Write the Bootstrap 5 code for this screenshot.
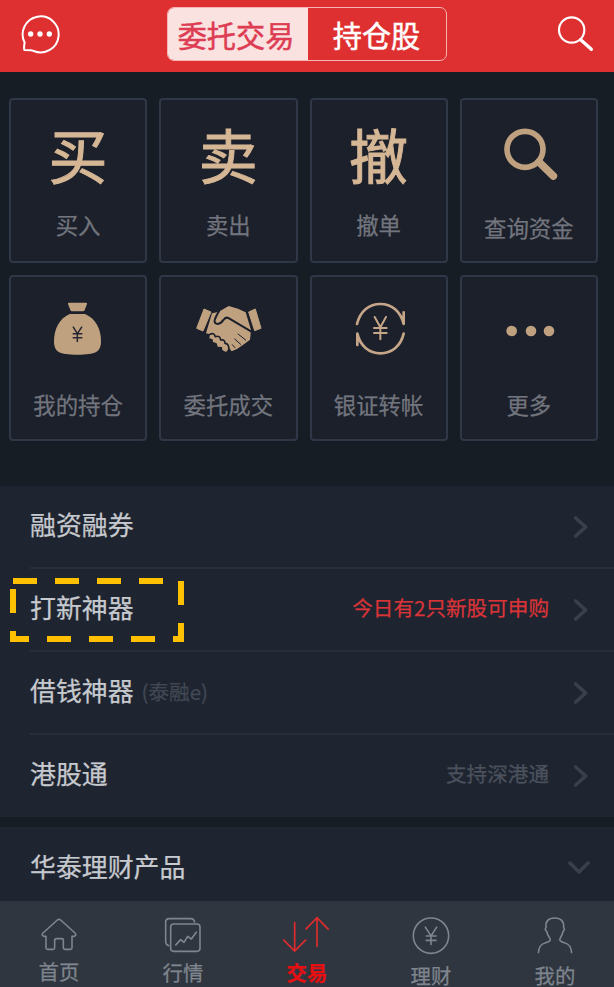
<!DOCTYPE html>
<html lang="zh-CN">
<head>
<meta charset="utf-8">
<meta name="viewport" content="width=device-width, initial-scale=1">
<title>委托交易</title>
<link href="https://cdn.jsdelivr.net/npm/bootstrap@5.3.0/dist/css/bootstrap.min.css" rel="stylesheet">
<style>
body{background:#171d25;font-family:"Noto Sans CJK SC",sans-serif;line-height:1;height:987px;-webkit-text-stroke:.25px currentColor}
svg{display:block;flex:none}
.topbar{height:71.5px;background:#df3031;padding:7px 20px 0}
.seg{width:280px;height:54px;border:1.5px solid #f6b5b2;border-radius:7px;font-size:29.2px;color:#fff;margin-left:106.5px;line-height:52px;-webkit-text-stroke-width:.5px}
.seg-on{background:#fae2e1;color:#dd3c52;width:140px;padding-right:3px}
.tiles{display:grid;grid-template-columns:repeat(4,1fr);gap:12px;padding:26px 16px 0 9px;height:414.5px;align-content:start}
.tile{height:165.5px;border:2px solid #303747;border-radius:4px;background:#1c202b;color:#72757d;font-size:22.4px;overflow:hidden}
.tile .pic{width:138px;height:110px;margin:-2px 0 0 -2px}
.tile .glyph{font-size:59px;line-height:110px;height:108px;color:#d5b695;-webkit-text-stroke:1px #d5b695;margin-top:-1px}
.tile .cap{line-height:34px}
.cap.low{padding-top:2px}
.rowline{height:82px;padding-left:30px;background:#1f2530;color:#c6c9ce;font-size:25.9px}
.rowline .ttl{padding-bottom:6px;white-space:nowrap}
.rowline .side{font-size:20.6px;color:#4b525e;padding-bottom:5px;margin-right:24px;white-space:nowrap}
.rowline .side.hot{color:#d93438}
.rowline .sub{font-size:20.6px;color:#414854;padding-bottom:3px;margin-left:8px}
.rule{height:2px;background:#282e39;margin-left:30px}
.arrow{margin-right:23px}
.panel{background:#1f2530;height:331px}
.mark-box{left:10px;top:9px}
.tabs{background:#30363f;height:86px;overflow:hidden}
.tabs .strip{margin:0 -3px}
.tab-i{width:124px;font-size:20.4px;color:#7f858e}
.tab-i.now{color:#e60f12;font-weight:700}
.d1{padding-top:4px}.d2{padding-top:5px}.d3{padding-top:7.5px}
</style>
<script src="https://cdn.jsdelivr.net/npm/bootstrap@5.3.0/dist/js/bootstrap.bundle.min.js"></script>
</head>
<body class="overflow-hidden">
<header class="topbar d-flex align-items-start">
  <svg width="40" height="54" viewBox="60 21 120 162" fill="none" stroke="#fff" stroke-width="6"><path d="M74 128A54 54 0 1 1 101 153Q98 150 73 150Q71 140 74 128Z" stroke-linejoin="round"/><g fill="#fff" stroke="none"><circle cx="92" cy="102" r="8"/><circle cx="120" cy="102" r="8"/><circle cx="148" cy="102" r="8"/></g></svg>
  <div class="seg d-flex overflow-hidden text-center"><div class="seg-on">委托交易</div><div class="flex-fill">持仓股</div></div>
  <svg class="ms-auto" width="40" height="54" viewBox="741 21 120 162" fill="none" stroke="#fff" stroke-width="6.5"><circle cx="794" cy="90" r="38"/><path d="M821 119L853 148" stroke-width="10" stroke-linecap="round"/></svg>
</header>

<main>
<section class="tiles text-center">
  <div class="tile"><div class="glyph">买</div><div class="cap">买入</div></div>
  <div class="tile"><div class="glyph">卖</div><div class="cap">卖出</div></div>
  <div class="tile"><div class="glyph">撤</div><div class="cap">撤单</div></div>
  <div class="tile"><svg class="pic" viewBox="457 21 414 330" fill="none" stroke="#bfa180"><circle cx="652" cy="175" r="54" stroke-width="17"/><path d="M694 213L737 255" stroke-width="23" stroke-linecap="round"/></svg><div class="cap low">查询资金</div></div>
  <div class="tile"><svg class="pic" viewBox="27 15 414 330"><g fill="#bfa180"><path d="M207 98H258Q262 98 261 102L254 120Q253 124 249 124H216Q212 124 211 120L204 102Q203 98 207 98Z"/><path d="M209 132H255C286 145 303 177 303 213C303 246 287 254 232 254S162 246 162 213C162 177 179 145 209 132Z"/></g><path d="M219 170L232 191L246 170M232 191V216M218 191H247M218 203H247" fill="none" stroke="#252630" stroke-width="4.5"/></svg><div class="cap low">我的持仓</div></div>
  <div class="tile"><svg class="pic" viewBox="477 15 414 330"><g fill="#bfa180"><path d="M612 117L633 126L609 183L590 175Z" stroke="#bfa180" stroke-width="3" stroke-linejoin="round"/><path d="M746 126L766 117L783 175L764 182Z" stroke="#bfa180" stroke-width="3" stroke-linejoin="round"/><path d="M636 130L655 126L686 108L714 116L737 127L753 180L750 209L737 219L723 229L711 237L695 244L688 235L678 246L667 240L666 231L653 230L650 220L639 216L638 208L628 205L630 193L618 190Z"/></g><g fill="none" stroke="#1c202b" stroke-linecap="round" stroke-linejoin="round"><path d="M657 124Q650 135 645 147Q640 160 653 162Q663 161 671 149Q677 139 687 145L753 184" stroke-width="6"/><path d="M630 193Q642 186 646 200Q660 195 662 210Q675 207 675 220Q689 220 686 244" stroke-width="5"/><path d="M714 192L737 210M704 207L722 223M697 224L705 233" stroke-width="3"/></g></svg><div class="cap low">委托成交</div></div>
  <div class="tile"><svg class="pic" viewBox="6 15 414 330" fill="none" stroke="#c6a688" stroke-width="8" stroke-linecap="round" stroke-linejoin="round"><path d="M147 162C157 122 184 102 217 102C250 102 277 122 287 162V127M287 191C278 229 251 250 217 250C184 250 157 229 148 191V225" /><path d="M200 141L217 172L234 141M217 172V208M198 174H236M198 189H236" stroke-width="6"/></svg><div class="cap low">银证转帐</div></div>
  <div class="tile"><svg class="pic" viewBox="457 15 414 330" fill="#bfa180"><circle cx="612" cy="183" r="16"/><circle cx="670" cy="183" r="16"/><circle cx="724" cy="183" r="16"/></svg><div class="cap low">更多</div></div>
</section>

<section class="panel">
  <div class="rowline d-flex align-items-center" style="height:81px"><span class="ttl">融资融券</span><svg class="arrow ms-auto" width="18" height="24" viewBox="798 120 54 72" fill="none" stroke="#39404b" stroke-width="11" stroke-linecap="round" stroke-linejoin="round"><path d="M806 129L836 156L806 183"/></svg></div>
  <div class="rule"></div>
  <div class="rowline d-flex align-items-center position-relative" style="height:81px"><span class="ttl">打新神器</span>
    <svg class="mark-box position-absolute" width="174" height="64" viewBox="30 309 522 192" fill="#ffc000" shape-rendering="crispEdges"><path d="M39 309h72v18h-72zM165 309h72v18h-72zM291 309h72v18h-72zM417 309h72v18h-72zM534 318h18v72h-18zM534 444h18v57h-33v-18h15zM393 483h72v18h-72zM267 483h72v18h-72zM141 483h72v18h-72zM30 468h18v15h39v18h-57zM30 342h18v72h-18z"/></svg>
    <span class="side hot ms-auto">今日有2只新股可申购</span><svg class="arrow" width="18" height="24" viewBox="798 120 54 72" fill="none" stroke="#39404b" stroke-width="11" stroke-linecap="round" stroke-linejoin="round"><path d="M806 129L836 156L806 183"/></svg></div>
  <div class="rule"></div>
  <div class="rowline d-flex align-items-center" style="height:81px"><span class="ttl">借钱神器</span><span class="sub">(泰融e)</span><svg class="arrow ms-auto" width="18" height="24" viewBox="798 120 54 72" fill="none" stroke="#39404b" stroke-width="11" stroke-linecap="round" stroke-linejoin="round"><path d="M806 129L836 156L806 183"/></svg></div>
  <div class="rule"></div>
  <div class="rowline d-flex align-items-center"><span class="ttl">港股通</span><span class="side ms-auto">支持深港通</span><svg class="arrow" width="18" height="24" viewBox="798 120 54 72" fill="none" stroke="#39404b" stroke-width="11" stroke-linecap="round" stroke-linejoin="round"><path d="M806 129L836 156L806 183"/></svg></div>
</section>
<section class="rowline d-flex align-items-center" style="height:74px;margin-top:10px"><span class="ttl pt-1 pb-0">华泰理财产品</span><svg class="ms-auto me-4 mt-2" width="24" height="18" viewBox="0 0 24 18" fill="none" stroke="#39404b" stroke-width="3.6" stroke-linecap="round" stroke-linejoin="round"><path d="M4 4L13 13L22 4"/></svg></section>
</main>

<nav class="tabs">
  <div class="strip d-flex text-center">
    <div class="tab-i flex-shrink-0"><svg width="124" height="56" viewBox="-9 18 372 168" fill="none" stroke="#7f858e" stroke-width="4.8" stroke-linejoin="round"><path d="M172 75Q177 71 182 75L225 114Q231 122 222 124H216V158Q216 163 211 163H195Q190 163 190 158V136Q190 131 185 131H170Q164 131 164 137V158Q164 163 159 163H143Q138 163 138 158V124H132Q123 122 129 114Z"/></svg><div class="d1">首页</div></div>
    <div class="tab-i flex-shrink-0"><svg width="124" height="56" viewBox="363 18 372 168" fill="none" stroke="#7f858e" stroke-width="4.8" stroke-linejoin="round"><rect x="512" y="87" width="88" height="82" rx="9"/><path d="M508 153Q497 150 497 139V82Q497 71 508 71H572Q583 71 584 83M526 151L542 134L552 142L563 124L574 132L590 110"/></svg><div class="d2">行情</div></div>
    <div class="tab-i now flex-shrink-0"><svg width="124" height="56" viewBox="735 18 372 168" fill="none" stroke="#df2b2d" stroke-width="5"><path d="M884 81V167M850 134L884 168L918 134M951 156V69M917 103L951 68L986 104"/></svg><div class="d2">交易</div></div>
    <div class="tab-i flex-shrink-0"><svg width="124" height="56" viewBox="186 18 372 168" fill="none" stroke="#7f858e" stroke-width="4.8"><circle cx="372" cy="122" r="53"/><path d="M354 95L372 123L390 95M372 123V150M356 123H389M356 136H389"/></svg><div class="d3">理财</div></div>
    <div class="tab-i flex-shrink-0"><svg width="124" height="56" viewBox="558 18 372 168" fill="none" stroke="#7f858e" stroke-width="4.8" stroke-linejoin="round"><path d="M694 175C695 152 704 146 716 143C727 140 732 138 729 131C723 122 720 117 719 109Q712 105 717 97C715 79 724 69 743 69S771 79 770 97Q775 105 768 109C767 117 764 122 759 131C756 138 762 140 772 143C784 146 793 152 794 175"/></svg><div class="d3">我的</div></div>
  </div>
</nav>
</body>
</html>
